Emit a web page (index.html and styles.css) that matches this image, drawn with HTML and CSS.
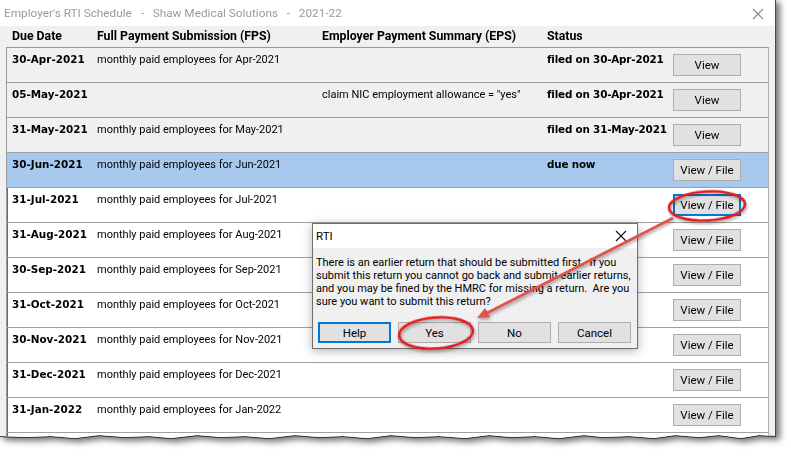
FILE: index.html
```html
<!DOCTYPE html>
<html lang="en">
<head>
    <meta charset="UTF-8">
    <title>Employer's RTI Schedule</title>
    <link rel="stylesheet" href="styles.css">
</head>
<body>
    <div class="frame">
        <div class="window">
            <div class="titlebar">
                <span class="title">Employer's RTI Schedule&nbsp;&nbsp; -&nbsp;&nbsp; Shaw Medical Solutions&nbsp;&nbsp; -&nbsp;&nbsp; 2021-22</span>
                <svg class="close" width="12" height="12" viewBox="0 0 12 12"><path d="M1 1L11 11M11 1L1 11" stroke="#8a8a8a" stroke-width="1.1" fill="none"/></svg>
            </div>
            <div class="cols head">
                <span>Due Date</span>
                <span>Full Payment Submission (FPS)</span>
                <span>Employer Payment Summary (EPS)</span>
                <span>Status</span>
            </div>
            <div class="schedule">
                <div class="cols row filed">
                    <span class="date">30-Apr-2021</span>
                    <span class="txt">monthly paid employees for Apr-2021</span>
                    <span class="txt"></span>
                    <span class="status">filed on 30-Apr-2021</span>
                    <button class="btn">View</button>
                </div>
                <div class="cols row filed">
                    <span class="date">05-May-2021</span>
                    <span class="txt"></span>
                    <span class="txt">claim NIC employment allowance = "yes"</span>
                    <span class="status">filed on 30-Apr-2021</span>
                    <button class="btn">View</button>
                </div>
                <div class="cols row filed">
                    <span class="date">31-May-2021</span>
                    <span class="txt">monthly paid employees for May-2021</span>
                    <span class="txt"></span>
                    <span class="status">filed on 31-May-2021</span>
                    <button class="btn">View</button>
                </div>
                <div class="cols row current">
                    <span class="date">30-Jun-2021</span>
                    <span class="txt">monthly paid employees for Jun-2021</span>
                    <span class="txt"></span>
                    <span class="status">due now</span>
                    <button class="btn">View / File</button>
                </div>
                <div class="cols row">
                    <span class="date">31-Jul-2021</span>
                    <span class="txt">monthly paid employees for Jul-2021</span>
                    <span class="txt"></span>
                    <span class="status"></span>
                    <button class="btn focus">View / File</button>
                </div>
                <div class="cols row">
                    <span class="date">31-Aug-2021</span>
                    <span class="txt">monthly paid employees for Aug-2021</span>
                    <span class="txt"></span>
                    <span class="status"></span>
                    <button class="btn">View / File</button>
                </div>
                <div class="cols row">
                    <span class="date">30-Sep-2021</span>
                    <span class="txt">monthly paid employees for Sep-2021</span>
                    <span class="txt"></span>
                    <span class="status"></span>
                    <button class="btn">View / File</button>
                </div>
                <div class="cols row">
                    <span class="date">31-Oct-2021</span>
                    <span class="txt">monthly paid employees for Oct-2021</span>
                    <span class="txt"></span>
                    <span class="status"></span>
                    <button class="btn">View / File</button>
                </div>
                <div class="cols row">
                    <span class="date">30-Nov-2021</span>
                    <span class="txt">monthly paid employees for Nov-2021</span>
                    <span class="txt"></span>
                    <span class="status"></span>
                    <button class="btn">View / File</button>
                </div>
                <div class="cols row">
                    <span class="date">31-Dec-2021</span>
                    <span class="txt">monthly paid employees for Dec-2021</span>
                    <span class="txt"></span>
                    <span class="status"></span>
                    <button class="btn">View / File</button>
                </div>
                <div class="cols row">
                    <span class="date">31-Jan-2022</span>
                    <span class="txt">monthly paid employees for Jan-2022</span>
                    <span class="txt"></span>
                    <span class="status"></span>
                    <button class="btn">View / File</button>
                </div>
                <div class="cols row">
                    <span class="date">28-Feb-2022</span>
                    <span class="txt">monthly paid employees for Feb-2022</span>
                </div>
            </div>
        </div>
    </div>

    <div class="dialog">
        <div class="dlg-title">
            <span>RTI</span>
            <svg width="12" height="12" viewBox="0 0 12 12"><path d="M1 1L11 11M11 1L1 11" stroke="#111" stroke-width="1.1" fill="none"/></svg>
        </div>
        <div class="dlg-body">
            <p class="msg">There is an earlier return that should be submitted first.&nbsp; If you<br>submit this return you cannot go back and submit earlier returns,<br>and you may be fined by the HMRC for missing a return.&nbsp; Are you<br>sure you want to submit this return?</p>
            <div class="dlg-buttons">
                <button class="btn wide focus">Help</button>
                <button class="btn wide">Yes</button>
                <button class="btn wide">No</button>
                <button class="btn wide">Cancel</button>
            </div>
        </div>
    </div>

    <!-- annotation marks drawn over the screenshot -->
    <svg class="marks" width="791" height="456" viewBox="0 0 791 456">
        <g class="ink">
            <line x1="673" y1="218" x2="487" y2="313" stroke="#e4534b" stroke-width="2.6"/>
            <polygon points="477,318 490,317 485,308" fill="#e4534b"/>
            <ellipse cx="707" cy="206" rx="38" ry="14.5" transform="rotate(-3 707 206)" fill="none" stroke="#e31b1d" stroke-width="2.6"/>
            <ellipse cx="436" cy="333" rx="37" ry="15.5" transform="rotate(-4 436 333)" fill="none" stroke="#e31b1d" stroke-width="2.6"/>
        </g>
    </svg>
</body>
</html>
```

FILE: styles.css
```css
body { margin: 0; background: #fff; font-family: Roboto, "Noto Sans", sans-serif; font-size: 11px; color: #000; position: relative; width: 791px; height: 456px; overflow: hidden; }

.frame { filter: drop-shadow(0 1px 0 #3a3a3a) drop-shadow(4px 3px 3px rgba(0,0,0,0.55)); }
.window { width: 777px; height: 442px; margin: -1px 0 0 -1px; box-sizing: border-box; border: 1px solid #4a4a4a; background: #f0f0f0;
    clip-path: polygon(0 0, 100% 0, 100% 437px, 760px 436px, 742px 439px, 720px 436px, 700px 438px, 676px 436px, 655px 439px, 630px 437px, 604px 438px, 585px 436px, 560px 439px, 536px 437px, 512px 438px, 490px 436px, 466px 439px, 440px 437px, 416px 438px, 392px 436px, 368px 439px, 344px 437px, 320px 438px, 296px 436px, 270px 439px, 246px 437px, 222px 438px, 198px 436px, 172px 439px, 150px 437px, 126px 438px, 100px 436px, 76px 439px, 52px 437px, 28px 438px, 0 437px); }

.titlebar { height: 26px; background: #fff; display: flex; align-items: center; justify-content: space-between; padding: 0 11px 0 4px; }
.title { color: #9a9a9a; font-size: 11.8px; white-space: nowrap; }
.close { margin-top: 1px; }

.cols { display: grid; grid-template-columns: 85px 225px 225px 126px 68px; padding-left: 5px; }
.head { height: 21px; box-sizing: border-box; padding: 3px 0 0 12px; font-weight: bold; font-size: 12.3px; }

.schedule { margin: 0 6px; height: 420px; background: #fff; border: 1px solid #9a9a9a; border-right-color: #b0b0b0; box-shadow: inset 1px 0 #6a6a6a; overflow: hidden; }
.row { height: 35px; box-sizing: border-box; border-bottom: 1px solid #a0a0a0; align-items: start; }
.row.filed { background: #f0f0f0; }
.row.current { background: #a8c9ee; }
.row > span { padding-top: 5px; white-space: nowrap; }
.date { font-family: "DejaVu Sans", sans-serif; font-weight: bold; font-size: 10.4px; padding-top: 5px !important; }
.status { font-family: "DejaVu Sans", sans-serif; font-weight: bold; font-size: 10.4px; letter-spacing: -0.2px; padding-top: 5px !important; }
.txt { font-size: 11px; }

.btn { font-family: Roboto, sans-serif; font-size: 11.5px; color: #000; background: #e1e1e1; border: 1px solid #adadad; height: 22px; margin-top: 6px; padding: 0; line-height: 18px; }
.btn.focus { border: 2px solid #0078d7; }

.dialog { position: absolute; left: 312px; top: 223px; width: 326px; height: 126px; box-sizing: border-box; border: 1px solid #6e6e6e; background: #f0f0f0; box-shadow: 0 2px 10px rgba(0,0,0,0.3); }
.dlg-title { height: 24px; background: #fff; display: flex; align-items: center; justify-content: space-between; padding: 0 10px 0 3px; font-size: 11.5px; }
.dlg-body { padding: 8px 0 0 3px; }
.msg { margin: 0; line-height: 13px; white-space: nowrap; font-size: 11px; }
.dlg-buttons { display: flex; gap: 7px; margin: 14px 0 0 2px; }
.btn.wide { width: 73px; height: 21px; margin: 0; }

.marks { position: absolute; left: 0; top: 0; pointer-events: none; }
.ink { filter: drop-shadow(1px 2px 1.5px rgba(0,0,0,0.35)); }
```
